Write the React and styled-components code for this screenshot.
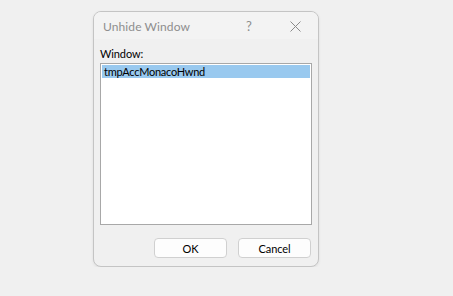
import React from "react";
import styled, { createGlobalStyle } from "styled-components";

const GlobalStyle = createGlobalStyle`
  html, body {
    margin: 0;
    padding: 0;
    background: #f0f0f0;
  }
  body {
    font-family: "Segoe UI", Lato, "Liberation Sans", sans-serif;
  }
`;

const Page = styled.div`
  padding: 11px 0 0 93px;
`;

const Dialog = styled.div`
  width: 224px;
  height: 254px;
  border: 1px solid #c4c4c4;
  border-radius: 8px;
  background: #f0f0f0;
  box-shadow: 0 1px 3px rgba(0, 0, 0, 0.08);
  display: flex;
  flex-direction: column;
  overflow: hidden;
`;

const TitleBar = styled.div`
  height: 29px;
  display: flex;
  align-items: center;
  background: #f3f3f3;
  padding: 1px 0 0 9px;
  box-sizing: border-box;
`;

const Title = styled.span`
  flex: 1;
  font-size: 12px;
  letter-spacing: 0.1px;
  color: #8e8e8e;
`;

const TitleButton = styled.span`
  width: 46px;
  display: flex;
  justify-content: center;
  align-items: center;
  font-size: 13px;
  color: #8e8e8e;
`;

const Body = styled.div`
  flex: 1;
  display: flex;
  flex-direction: column;
  padding: 8px 6px 8px 6px;
`;

const Label = styled.div`
  font-size: 11px;
  letter-spacing: -0.1px;
  color: #000;
  line-height: 14px;
  margin-bottom: 2px;
`;

const ListBox = styled.div`
  height: 158px;
  border: 1px solid #a8a8a8;
  background: #fff;
  padding: 1px;
`;

const Item = styled.div`
  height: 13px;
  line-height: 13px;
  padding-left: 2px;
  font-size: 11px;
  letter-spacing: -0.25px;
  color: #000;
  background: ${(p) => (p.$selected ? "#99c9ef" : "transparent")};
`;

const Buttons = styled.div`
  display: flex;
  justify-content: flex-end;
  gap: 11px;
  margin-top: 13px;
  padding-right: 1px;
`;

const Button = styled.button`
  width: 73px;
  height: 20px;
  border: 1px solid #d0d0d0;
  border-radius: 4px;
  background: #fdfdfd;
  font-family: inherit;
  font-size: 11px;
  letter-spacing: -0.1px;
  color: #000;
  padding: 0;
`;

function CloseIcon() {
  return (
    <svg width="11" height="11" viewBox="0 0 11 11">
      <path d="M0.5 0.5L10.5 10.5M10.5 0.5L0.5 10.5" stroke="#8a8a8a" strokeWidth="1" />
    </svg>
  );
}

export default function App() {
  return (
    <Page>
      <GlobalStyle />
      <Dialog>
        <TitleBar>
          <Title>Unhide Window</Title>
          <TitleButton>?</TitleButton>
          <TitleButton>
            <CloseIcon />
          </TitleButton>
        </TitleBar>
        <Body>
          <Label>Window:</Label>
          <ListBox>
            <Item $selected>tmpAccMonacoHwnd</Item>
          </ListBox>
          <Buttons>
            <Button>OK</Button>
            <Button>Cancel</Button>
          </Buttons>
        </Body>
      </Dialog>
    </Page>
  );
}
